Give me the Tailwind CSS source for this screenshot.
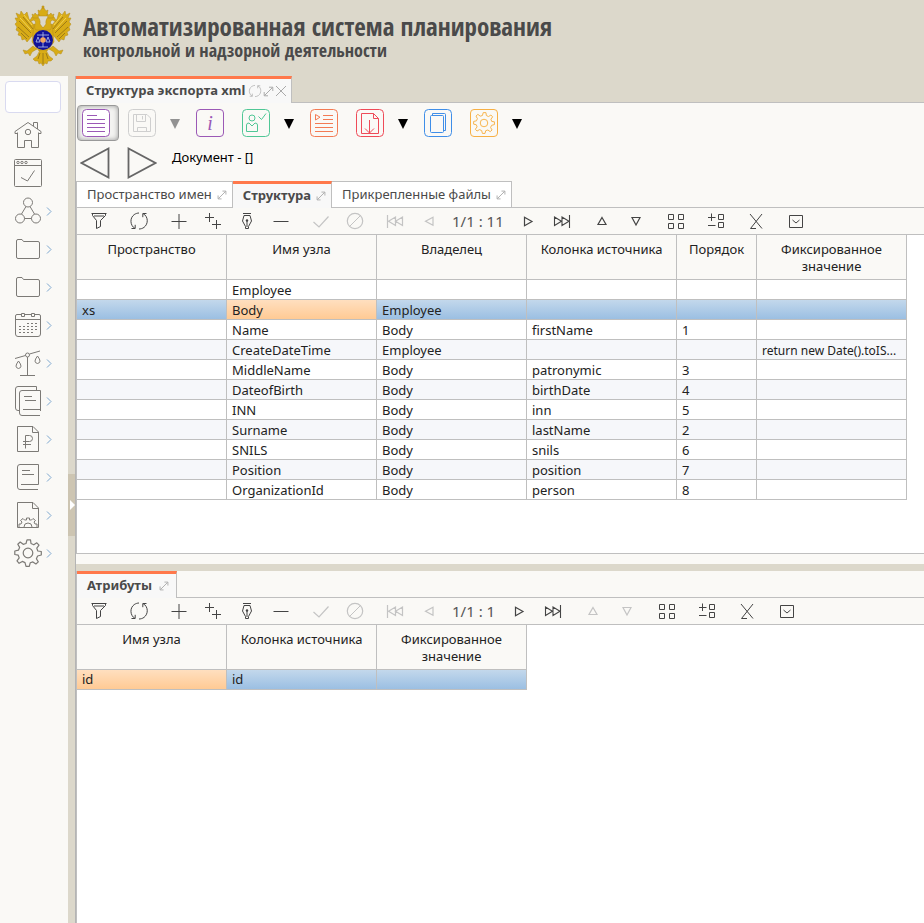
<!DOCTYPE html>
<html lang="ru">
<head>
<meta charset="utf-8">
<title>Структура экспорта xml</title>
<script src="https://cdn.jsdelivr.net/npm/@tailwindcss/browser@4"></script>
</head>
<body class="flex min-h-screen flex-col bg-[#faf9f6] font-['Noto_Sans','Open_Sans',sans-serif] text-[13px] text-[#222]">

<svg class="hidden" aria-hidden="true">
  <symbol id="expand" viewBox="0 0 11 11"><path d="M1.5 9.5 9.5 1.500M6 1.200H9.800V5M1.200 6V9.800H5" fill="none" stroke="currentColor"/></symbol>
  <symbol id="refresh" viewBox="0 0 20 20"><path d="M6 17.500C1 14.500.5 7 5.200 3.600 6.600 2.600 8.500 2 10 2M14 2.500C19.500 5.500 19.500 13 15 16.400 13.500 17.500 11.500 18 10 18M2.500 17.500H6.200V13.800M17.500 2.500H13.800V6.200" fill="none" stroke="currentColor"/></symbol>
  <symbol id="filter" viewBox="0 0 20 20"><path d="M2.500 2.500H17.500M3.500 2.500V4.500L7.500 9.500V17.500L11.500 15.500V9.500L16.500 4.500V2.500M5 5H15" fill="none" stroke="currentColor"/></symbol>
  <symbol id="plus" viewBox="0 0 20 20"><path d="M10 3V18M2.500 10.500H17.500" fill="none" stroke="currentColor"/></symbol>
  <symbol id="plus2" viewBox="0 0 20 20"><path d="M6.500 2V11M2 6.500H11M13.500 9V18M9 13.500H18" fill="none" stroke="currentColor"/></symbol>
  <symbol id="pen" viewBox="0 0 20 20"><path d="M6 2.500H14M7 4.500H13L14.500 10 11.500 15.500V17.500H8.500V15.500L5.500 10ZM10 10V16" fill="none" stroke="currentColor"/><circle cx="10" cy="9.500" r="1.200" fill="currentColor"/></symbol>
  <symbol id="minus" viewBox="0 0 20 20"><path d="M2.500 10.500H17.500" fill="none" stroke="currentColor"/></symbol>
  <symbol id="check" viewBox="0 0 20 20"><path d="M2.500 11 8 16 17.500 5.500" fill="none" stroke="currentColor" stroke-width="1.200"/></symbol>
  <symbol id="cancel" viewBox="0 0 20 20"><path d="M4.500 15.500 15.500 4.500" stroke="currentColor"/><circle cx="10" cy="10" r="7.700" fill="none" stroke="currentColor" stroke-width="1.200"/></symbol>
  <symbol id="first" viewBox="0 0 20 20"><path d="M2.500 4V17M10.500 6V14.500L3.500 10.200ZM17.500 6V14.500L10.500 10.200Z" fill="none" stroke="currentColor" stroke-width="1.200"/></symbol>
  <symbol id="prev" viewBox="0 0 20 20"><path d="M14 6.200V14.300L6.500 10.200Z" fill="none" stroke="currentColor" stroke-width="1.200"/></symbol>
  <symbol id="next" viewBox="0 0 20 20"><path d="M6.500 6.200V14.800L14 10.500Z" fill="none" stroke="currentColor" stroke-width="1.200"/></symbol>
  <symbol id="last" viewBox="0 0 20 20"><path d="M17.500 4V17M2.500 6V14.500L9.500 10.200ZM10 6V14.500L17 10.200Z" fill="none" stroke="currentColor" stroke-width="1.100"/></symbol>
  <symbol id="up" viewBox="0 0 20 20"><path d="M10 6.500 14 13.500H6Z" fill="none" stroke="currentColor" stroke-width="1.200"/></symbol>
  <symbol id="down" viewBox="0 0 20 20"><path d="M10 14 14 6.500H6Z" fill="none" stroke="currentColor" stroke-width="1.200"/></symbol>
  <symbol id="grid" viewBox="0 0 20 20"><path d="M2.500 3.500H7.500V8.500H2.500ZM12.500 3.500H17.500V8.500H12.500ZM2.500 12.500H7.500V17.500H2.500ZM12.500 12.500H17.500V17.500H12.500Z" fill="none" stroke="currentColor"/></symbol>
  <symbol id="plusgrid" viewBox="0 0 20 20"><path d="M12.500 3.500H17.500V8.500H12.500ZM12.500 11.500H17.500V16.500H12.500ZM2 6.500H9.500M5.500 2.500V10M2 14.500H9.500" fill="none" stroke="currentColor"/></symbol>
  <symbol id="excel" viewBox="0 0 20 20"><path d="M4 3 16 17.500M16 3 4.500 17.500H10" fill="none" stroke="currentColor"/></symbol>
  <symbol id="box" viewBox="0 0 20 20"><path d="M3.500 4.500H16.500V16.500H3.500ZM6.500 9 10 12 13.500 9" fill="none" stroke="currentColor"/></symbol>
  <symbol id="chev" viewBox="0 0 6 9"><path d="M1 .5 5 4.500 1 8.500" fill="none" stroke="#7da7cf"/></symbol>
  <symbol id="folder" viewBox="0 0 28 28"><path d="M2.500 6V22Q2.500 23.500 4 23.500H24Q25.500 23.500 25.500 22V8Q25.500 6.500 24 6.500H9.500L8 4.500H4Q2.500 4.500 2.500 6Z" fill="none" stroke="currentColor"/></symbol>
  <symbol id="gear" viewBox="0 0 28 28"><path d="M12 4.500 13 .800H16.500L17 4.500 19.800 5.800 22.800 3.800 25 6.200 22.800 9.200 23.800 12 27.300 12.500V16L23.600 17 22.400 19.800 24.300 22.900 21.900 25 18.900 22.900 16.200 23.800 15.300 27.300H12L11 23.600 8.300 22.400 5.100 24.300 3 21.900 5.200 18.900 4.200 16.200.8 15.500V12L4.400 11.200 5.600 8.400 3.800 5.200 6.200 3 9.200 5.300Z" fill="none" stroke="currentColor" stroke-width="1.200" stroke-linejoin="round"/><circle cx="14" cy="14" r="4.800" fill="none" stroke="currentColor" stroke-width="1.200"/></symbol>
</svg>

<header class="flex h-[76px] shrink-0 items-start bg-[#dcd8cb]">
  <svg class="ml-3 mt-1 h-16 w-[60px] shrink-0" viewBox="0 0 60 64" role="img" aria-label="Герб">
    <g fill="#d8ac16" stroke="#b28a1c" stroke-width=".5">
      <path d="M27 28 21 31 15 38 13 35 10 36 9 32 6 31 7 28 4 26 5 23 3 20 5 18 3 14 6 14 4 9 8 11 9 7 12 11 15 8 17 15 22 21 27 22Z"/>
      <path d="M35 28 41 31 47 38 49 35 52 36 53 32 56 31 55 28 58 26 57 23 59 20 57 18 59 14 56 14 58 9 54 11 53 7 50 11 47 8 45 15 40 21 35 22Z"/>
      <path d="M22 20 31 24 40 20 42 38 35 47 27 47 20 38Z"/>
      <path d="M24 26C20 22 26 19 22 16L17 18 20 13C25 10 29 15 28 20L31 24 34 20C33 15 37 10 42 13L45 18 40 16C36 19 42 22 38 26Z"/>
      <path d="M28 46 25 52 21 55 23 57 26 57 27 60 29 59 31 62 33 59 35 60 36 57 39 57 41 55 37 52 34 46Z"/>
      <path d="M21 42 15 47 11 46 13 50 16 49 18 52 20 48 25 45ZM41 42 47 47 51 46 49 50 46 49 44 52 42 48 37 45Z"/>
      <path d="M26 6 28 7 30 4H32L34 7 36 6 35 12H27ZM30 2H32V4H30ZM20 10 22 11 23 9 25 11 27 10 26 14H21ZM42 10 40 11 39 9 37 11 35 10 36 14H41Z"/>
    </g>
    <path d="M7 17 19 29M6 23 17 33M11 13 21 25M9 29 15 35M55 17 43 29M56 23 45 33M51 13 41 25M53 29 47 35M28 49 26 55M31 49V60M34 49 36 55" fill="none" stroke="#8f6f16" stroke-width=".8"/>
    <path d="M8 14 19 26M12 11 20 21M54 14 43 26M50 11 42 21" stroke="#f5d453"/>
    <circle cx="31" cy="36" r="10" fill="#10129a"/>
    <path d="M31 28V43M25 31H37M24 38 26 33 28 38ZM34 38 36 33 38 38ZM26 43H36" fill="none" stroke="#b9c7ec" stroke-width=".8"/>
    <circle cx="31" cy="36" r="2.800" fill="#f2a65f"/>
  </svg>
  <div class="ml-[11px] mt-[11px] whitespace-nowrap font-['Open_Sans_Condensed','Noto_Sans_Condensed',Roboto,sans-serif] font-bold text-[#4a4a4a]">
    <h1 class="text-[25px] leading-[30px]">Автоматизированная система планирования</h1>
    <p class="text-[18px] leading-[18px]">контрольной и надзорной деятельности</p>
  </div>
</header>

<div class="flex flex-1">
  <aside class="w-[68px] shrink-0 pt-[5px] text-[#7c7a76]">
    <input type="search" aria-label="Поиск" class="ml-[5px] block h-8 w-14 rounded border border-[#d9daf0] bg-white px-1">
    <nav class="mt-[3px] flex flex-col">
      <a href="#" aria-label="Главная" class="flex h-[38px] items-center pl-[14px]"><svg class="size-7" viewBox="0 0 28 28" fill="none" stroke="currentColor"><path d="M3.500 11.500V26.500H10.500V19.500H17.500V26.500H24.500V11.500M1 12.500V10.500L14 1.500 27 10.500V12.500L24.500 12.500M1 12.500H3.500M19.500 5V1.500H23.500V8"/><circle cx="14" cy="11" r="2.700"/></svg></a>
      <a href="#" aria-label="Задачи" class="flex h-[38px] items-center pl-[14px]"><svg class="size-7" viewBox="0 0 28 28" fill="none" stroke="currentColor"><rect x=".5" y=".5" width="27" height="27" rx="1"/><path d="M.5 6.500H27.500M7 18.500 13.500 22 20.500 11.500"/><circle cx="4" cy="3.500" r="1.200"/><circle cx="8" cy="3.500" r="1.200"/><circle cx="12" cy="3.500" r="1.200"/></svg></a>
      <a href="#" aria-label="Процессы" class="flex h-[38px] items-center gap-1 pl-[14px]"><svg class="size-7" viewBox="0 0 28 28" fill="none" stroke="currentColor"><circle cx="14" cy="5.500" r="4.500"/><circle cx="6" cy="21.500" r="4.500"/><circle cx="22" cy="21.500" r="4.500"/><path d="M12 9.500 7.500 17M16 9.500 20.500 17M10.500 21.500H17.500"/></svg><svg class="h-[9px] w-[6px]"><use href="#chev"/></svg></a>
      <a href="#" aria-label="Папка" class="flex h-[38px] items-center gap-1 pl-[14px]"><svg class="size-7"><use href="#folder"/></svg><svg class="h-[9px] w-[6px]"><use href="#chev"/></svg></a>
      <a href="#" aria-label="Архив" class="flex h-[38px] items-center gap-1 pl-[14px]"><svg class="size-7"><use href="#folder"/></svg><svg class="h-[9px] w-[6px]"><use href="#chev"/></svg></a>
      <a href="#" aria-label="Календарь" class="flex h-[38px] items-center gap-1 pl-[14px]"><svg class="size-7" viewBox="0 0 28 28" fill="none" stroke="currentColor"><path d="M7.500 3.500H3Q1.500 3.500 1.500 5V23Q1.500 25.500 4 25.500H24Q26.500 25.500 26.500 23V5Q26.500 3.500 25 3.500H20.500M10.500 3.500H17.500M1.500 8.500H26.500M7.500 2.500H10.500V5.500H7.500ZM17.500 2.500H20.500V5.500H17.500Z"/><path d="M13 12.500H24M5 15.500H24M5 18.500H24M5 21.500H19" stroke-dasharray="2 2"/></svg><svg class="h-[9px] w-[6px]"><use href="#chev"/></svg></a>
      <a href="#" aria-label="Весы" class="flex h-[38px] items-center gap-1 pl-[14px]"><svg class="size-7" viewBox="0 0 28 28" fill="none" stroke="currentColor"><path d="M1 9.500 11.500 6.500M15.500 5 26 2M13.500 8V26.500M6 26.500H21M4.500 12Q-.5 18.500 4.500 19.500 9.500 18.500 4.500 12ZM23.500 7Q18.500 13.500 23.500 14.500 28.500 13.500 23.500 7Z"/><circle cx="13.500" cy="6" r="2"/></svg><svg class="h-[9px] w-[6px]"><use href="#chev"/></svg></a>
      <a href="#" aria-label="Документы" class="flex h-[38px] items-center gap-1 pl-[14px]"><svg class="h-[30px] w-7" viewBox="0 0 28 30" fill="none" stroke="currentColor"><path d="M22.500 4.500V.5H4Q1.500.5 1.500 3V22Q1.500 24.500 4 24.500H5M5.500 7V27Q5.500 29.500 8 29.500H26M26.500 25V4.500H8Q5.500 4.500 5.500 7M10 10.500H18M11 14.500H22M9 23.500H26.500"/></svg><svg class="h-[9px] w-[6px]"><use href="#chev"/></svg></a>
      <a href="#" aria-label="Платежи" class="flex h-[38px] items-center gap-1 pl-[14px]"><svg class="size-7" viewBox="0 0 28 28" fill="none" stroke="currentColor"><path d="M3.500 1.500H19L24.500 7V26.500H3.500ZM18.500 1.500V7.500H24.500M11.500 23.500V10.500H15.500Q18.500 10.500 18.500 13.500T15.500 16.500H9M9 19.500H17"/></svg><svg class="h-[9px] w-[6px]"><use href="#chev"/></svg></a>
      <a href="#" aria-label="Справочник" class="flex h-[38px] items-center gap-1 pl-[14px]"><svg class="size-7" viewBox="0 0 28 28" fill="none" stroke="currentColor"><path d="M24.500 21.500V1.500H6Q3.500 1.500 3.500 4V24Q3.500 26.500 6 26.500H24M8 7.500H16M8 11.500H20M7 21.500H24.500"/></svg><svg class="h-[9px] w-[6px]"><use href="#chev"/></svg></a>
      <a href="#" aria-label="Настройка документов" class="flex h-[38px] items-center gap-1 pl-[14px]"><svg class="size-7" viewBox="0 0 28 28" fill="none" stroke="currentColor"><path d="M3.500 1.500H19L24.500 7V26.500H3.500ZM18.500 1.500V7.500H24.500M5 26V23H7L8 21 6.500 19.500 9 17.500 10.500 19H12.500V17H15.500V19H17.500L19 17.500 21.500 19.500 20 21 21 23H23V26M10 26Q10 22 14 22T18 26"/></svg><svg class="h-[9px] w-[6px]"><use href="#chev"/></svg></a>
      <a href="#" aria-label="Настройки" class="flex h-[38px] items-center gap-1 pl-[14px]"><svg class="size-7"><use href="#gear"/></svg><svg class="h-[9px] w-[6px]"><use href="#chev"/></svg></a>
    </nav>
  </aside>

  <div class="w-[7px] shrink-0 bg-[#dcd8cb] pt-[398px]">
    <button aria-label="Свернуть панель" class="flex h-[62px] w-full items-center justify-end bg-[#cdc5b2]"><svg class="h-[10px] w-[5px]" viewBox="0 0 5 10"><path d="M0 0 5 5 0 10Z" fill="#fff"/></svg></button>
  </div>

  <main class="flex min-w-0 flex-1 flex-col border-l border-[#b4b4b4]">
    <div class="flex h-[27px] bg-[#dcd8cb]">
      <div class="flex items-center border-r border-t-3 border-r-[#bfbfbf] border-t-[#ff784b] bg-[#f8f8f8] pl-[10px] pr-1 text-[#4a4a4a]">
        <h2 class="mr-[3px] whitespace-nowrap text-[13px] font-bold">Структура экспорта xml</h2>
        <button aria-label="Обновить" class="text-[#aaa]"><svg class="size-[14px]"><use href="#refresh"/></svg></button>
        <button aria-label="Развернуть" class="text-[#aaa]"><svg class="mx-px size-[11px]"><use href="#expand"/></svg></button>
        <button aria-label="Закрыть" class="text-[#aaa]"><svg class="size-3" viewBox="0 0 12 12"><path d="M1 1 11 11M11 1 1 11" stroke="currentColor"/></svg></button>
      </div>
      <div class="flex-1 border-b border-[#bfbfbf]"></div>
    </div>

    <div class="flex gap-1 pl-px pt-[2px]">
      <button aria-label="Документ" class="flex h-9 w-[42px] items-center rounded border border-[#999] bg-[#f3f3f1] pl-1 text-[#9b59b6] shadow-[inset_0_0_5px_#999]"><svg class="size-7" viewBox="0 0 28 28" fill="none" stroke="currentColor"><rect x=".5" y=".5" width="27" height="27" rx="4" fill="#fff"/><path d="M5 6.500H15M5 10.500H23M5 14.500H23M5 18.500H23M5 22.500H23"/></svg></button>
      <div class="flex">
        <button aria-label="Сохранить" disabled class="flex h-9 w-[42px] items-center pl-[5px] text-[#cfcfcf]"><svg class="size-7" viewBox="0 0 28 28" fill="none" stroke="currentColor"><rect x=".5" y=".5" width="27" height="27" rx="4"/><path d="M5.500 5.500H19L22.500 9V22.500H5.500ZM8.500 5.500V12.500H17.500V5.500M14.500 7V10.500M9.500 22.500V18.500H18.500V22.500"/></svg></button>
        <button aria-label="Варианты сохранения" disabled class="flex w-[22px] items-center pl-[5px] text-[#929292]"><svg class="mt-[2px] h-[10px] w-[10px]" viewBox="0 0 10 10"><path d="M0 0H10L5 10Z" fill="currentColor"/></svg></button>
      </div>
      <button aria-label="Информация" class="flex h-9 w-[42px] items-center pl-[5px] text-[#9b59b6]"><span class="flex size-7 items-center justify-center rounded border border-current font-['Liberation_Serif',serif] text-xl italic">i</span></button>
      <div class="flex">
        <button aria-label="Согласование" class="flex h-9 w-[42px] items-center pl-[5px] text-[#50c796]"><svg class="size-7" viewBox="0 0 28 28" fill="none" stroke="currentColor"><rect x=".5" y=".5" width="27" height="27" rx="4"/><circle cx="10" cy="9" r="3"/><path d="M4.500 22.500V16Q4.500 14 7 14L10 17 13 14Q15.500 14 15.500 16V22.500ZM16.500 7.500 19.500 10.500 24 4.500"/></svg></button>
        <button aria-label="Варианты согласования" class="flex w-[22px] items-center pl-[5px] text-black"><svg class="mt-[2px] h-[10px] w-[10px]" viewBox="0 0 10 10"><path d="M0 0H10L5 10Z" fill="currentColor"/></svg></button>
      </div>
      <button aria-label="Выполнить" class="flex h-9 w-[42px] items-center pl-[5px] text-[#f37b54]"><svg class="size-7" viewBox="0 0 28 28" fill="none" stroke="currentColor"><rect x=".5" y=".5" width="27" height="27" rx="4"/><path d="M5.500 5.500V11L10 8.200ZM13 6.500H23M13 10.500H23M5 14.500H23M5 18.500H23M5 22.500H23"/></svg></button>
      <div class="flex">
        <button aria-label="Выгрузить" class="flex h-9 w-[42px] items-center pl-[5px] text-[#ef4b58]"><svg class="size-7" viewBox="0 0 28 28" fill="none" stroke="currentColor"><rect x=".5" y=".5" width="27" height="27" rx="4"/><path d="M5.500 4.500H17.500L22.500 9.500V24.500H5.500ZM17.500 4.500V9.500H22.500M13.500 11V24M9 19.500 13.500 24 18 19.500"/></svg></button>
        <button aria-label="Варианты выгрузки" class="flex w-[22px] items-center pl-[5px] text-black"><svg class="mt-[2px] h-[10px] w-[10px]" viewBox="0 0 10 10"><path d="M0 0H10L5 10Z" fill="currentColor"/></svg></button>
      </div>
      <button aria-label="Копировать" class="flex h-9 w-[42px] items-center pl-[5px] text-[#3f8ee8]"><svg class="size-7" viewBox="0 0 28 28" fill="none" stroke="currentColor"><rect x=".5" y=".5" width="27" height="27" rx="4"/><rect x="6.500" y="6.500" width="13" height="17" rx="1"/><path d="M8.500 6V4.500H20.500Q21.500 4.500 21.500 5.500V21.500H20"/></svg></button>
      <div class="flex">
        <button aria-label="Настройки" class="flex h-9 w-[42px] items-center pl-[5px] text-[#f7b045]"><span class="flex size-7 items-center justify-center rounded border border-current"><svg class="size-[22px]" viewBox="0 0 28 28"><use href="#gear"/></svg></span></button>
        <button aria-label="Варианты настроек" class="flex w-[22px] items-center pl-[5px] text-black"><svg class="mt-[2px] h-[10px] w-[10px]" viewBox="0 0 10 10"><path d="M0 0H10L5 10Z" fill="currentColor"/></svg></button>
      </div>
    </div>

    <div class="flex h-10 items-start pl-1 pt-[6px]">
      <button aria-label="Назад"><svg class="h-8 w-[30px]" viewBox="0 0 30 32"><path d="M28.500 1.500V30.500L1.500 16Z" fill="none" stroke="#666" stroke-width="1.800"/></svg></button>
      <button aria-label="Вперёд" class="ml-[17px]"><svg class="h-8 w-[30px]" viewBox="0 0 30 32"><path d="M1.500 1.500V30.500L28.500 16Z" fill="none" stroke="#666" stroke-width="1.800"/></svg></button>
      <span class="ml-[15px] mt-px text-[13px] text-black">Документ - []</span>
    </div>

    <section class="border-l border-[#bfbfbf]" aria-label="Структура">
      <div class="flex h-[27px] whitespace-nowrap text-[#4a4a4a]" role="tablist">
        <button role="tab" class="flex items-center gap-[5px] border-y border-r border-[#bfbfbf] bg-white pl-[10px] pr-[5px]">Пространство имен<svg class="size-[10px] text-[#aaa]"><use href="#expand"/></svg></button>
        <button role="tab" aria-selected="true" class="flex items-center gap-[5px] border-t-3 border-r border-r-[#bfbfbf] border-t-[#ff784b] bg-[#f8f8f8] pl-[10px] pr-[5px] font-bold">Структура<svg class="size-[10px] text-[#aaa]"><use href="#expand"/></svg></button>
        <button role="tab" class="flex items-center gap-[5px] border-y border-r border-[#bfbfbf] bg-white pl-[10px] pr-[5px]">Прикрепленные файлы<svg class="size-[10px] text-[#aaa]"><use href="#expand"/></svg></button>
        <div class="flex-1 border-b border-[#bfbfbf]"></div>
      </div>
      <div class="flex h-[27px] gap-[6px] border-b border-[#bfbfbf] pl-[5px] text-[#444] [&_button]:flex [&_button]:w-[34px] [&_button]:items-center [&_button]:justify-center [&_button:disabled]:text-[#c4c4c4] [&_svg]:size-5">
        <button aria-label="Фильтр"><svg><use href="#filter"/></svg></button>
        <button aria-label="Обновить"><svg><use href="#refresh"/></svg></button>
        <div class="flex">
          <button aria-label="Добавить"><svg><use href="#plus"/></svg></button>
          <button aria-label="Добавить копию"><svg><use href="#plus2"/></svg></button>
          <button aria-label="Изменить"><svg><use href="#pen"/></svg></button>
          <button aria-label="Удалить"><svg><use href="#minus"/></svg></button>
        </div>
        <div class="flex">
          <button aria-label="Принять" disabled><svg><use href="#check"/></svg></button>
          <button aria-label="Отменить" disabled><svg><use href="#cancel"/></svg></button>
        </div>
        <div class="flex">
          <button aria-label="Первая" disabled><svg><use href="#first"/></svg></button>
          <button aria-label="Предыдущая" disabled><svg><use href="#prev"/></svg></button>
          <span class="flex items-center pl-[6px] pr-[7px] text-[15px] text-[#555]">1/1 : 11</span>
          <button aria-label="Следующая"><svg><use href="#next"/></svg></button>
          <button aria-label="Последняя"><svg><use href="#last"/></svg></button>
        </div>
        <div class="flex">
          <button aria-label="Вверх"><svg><use href="#up"/></svg></button>
          <button aria-label="Вниз"><svg><use href="#down"/></svg></button>
        </div>
        <button aria-label="Плитка"><svg><use href="#grid"/></svg></button>
        <button aria-label="Колонки"><svg><use href="#plusgrid"/></svg></button>
        <button aria-label="Экспорт"><svg><use href="#excel"/></svg></button>
        <button aria-label="Ещё"><svg><use href="#box"/></svg></button>
      </div>
      <div class="border-b border-[#bfbfbf] bg-white pb-[53px]">
        <table class="w-[830px] table-fixed border-separate border-spacing-0 leading-[17px] [&_td]:h-5 [&_td]:overflow-hidden [&_td]:border-b [&_td]:border-r [&_td]:border-[#bfbfbf] [&_td]:pl-[5px] [&_td]:pr-1 [&_td]:pt-[2px] [&_td]:text-ellipsis [&_td]:whitespace-nowrap [&_th]:h-[45px] [&_th]:border-b [&_th]:border-r [&_th]:border-[#bfbfbf] [&_th]:bg-[#faf9f6] [&_th]:px-3 [&_th]:pt-[6px] [&_th]:align-top [&_th]:font-normal [&_tbody_tr:nth-child(even)]:bg-[#f6f7fa]">
          <colgroup><col class="w-[150px]"><col class="w-[150px]"><col class="w-[150px]"><col class="w-[150px]"><col class="w-[80px]"><col class="w-[150px]"></colgroup>
          <thead><tr><th>Пространство</th><th>Имя узла</th><th>Владелец</th><th>Колонка источника</th><th>Порядок</th><th>Фиксированное значение</th></tr></thead>
          <tbody>
            <tr><td></td><td>Employee</td><td></td><td></td><td></td><td></td></tr>
            <tr class="[&_td]:bg-linear-to-b [&_td]:from-[#c3d8ec] [&_td]:to-[#9bbfe2]"><td>xs</td><td class="from-[#ffdfbf]! to-[#ffca94]!">Body</td><td>Employee</td><td></td><td></td><td></td></tr>
            <tr><td></td><td>Name</td><td>Body</td><td>firstName</td><td>1</td><td></td></tr>
            <tr><td></td><td>CreateDateTime</td><td>Employee</td><td></td><td></td><td class="text-[12px]">return new Date().toIS...</td></tr>
            <tr><td></td><td>MiddleName</td><td>Body</td><td>patronymic</td><td>3</td><td></td></tr>
            <tr><td></td><td>DateofBirth</td><td>Body</td><td>birthDate</td><td>4</td><td></td></tr>
            <tr><td></td><td>INN</td><td>Body</td><td>inn</td><td>5</td><td></td></tr>
            <tr><td></td><td>Surname</td><td>Body</td><td>lastName</td><td>2</td><td></td></tr>
            <tr><td></td><td>SNILS</td><td>Body</td><td>snils</td><td>6</td><td></td></tr>
            <tr><td></td><td>Position</td><td>Body</td><td>position</td><td>7</td><td></td></tr>
            <tr><td></td><td>OrganizationId</td><td>Body</td><td>person</td><td>8</td><td></td></tr>
          </tbody>
        </table>
      </div>
    </section>

    <div class="mt-[10px] h-[7px] bg-[#dcd8cb]"></div>

    <section class="flex flex-1 flex-col border-l border-[#bfbfbf]" aria-label="Атрибуты">
      <div class="flex h-[27px] whitespace-nowrap text-[#4a4a4a]" role="tablist">
        <button role="tab" aria-selected="true" class="flex items-center gap-[7px] border-t-3 border-r border-r-[#bfbfbf] border-t-[#ff784b] bg-[#f8f8f8] pl-[10px] pr-[7px] font-bold">Атрибуты<svg class="size-[10px] text-[#aaa]"><use href="#expand"/></svg></button>
        <div class="flex-1 border-b border-[#bfbfbf]"></div>
      </div>
      <div class="flex h-[27px] gap-[6px] border-b border-[#bfbfbf] pl-[5px] text-[#444] [&_button]:flex [&_button]:w-[34px] [&_button]:items-center [&_button]:justify-center [&_button:disabled]:text-[#c4c4c4] [&_svg]:size-5">
        <button aria-label="Фильтр"><svg><use href="#filter"/></svg></button>
        <button aria-label="Обновить"><svg><use href="#refresh"/></svg></button>
        <div class="flex">
          <button aria-label="Добавить"><svg><use href="#plus"/></svg></button>
          <button aria-label="Добавить копию"><svg><use href="#plus2"/></svg></button>
          <button aria-label="Изменить"><svg><use href="#pen"/></svg></button>
          <button aria-label="Удалить"><svg><use href="#minus"/></svg></button>
        </div>
        <div class="flex">
          <button aria-label="Принять" disabled><svg><use href="#check"/></svg></button>
          <button aria-label="Отменить" disabled><svg><use href="#cancel"/></svg></button>
        </div>
        <div class="flex">
          <button aria-label="Первая" disabled><svg><use href="#first"/></svg></button>
          <button aria-label="Предыдущая" disabled><svg><use href="#prev"/></svg></button>
          <span class="flex items-center pl-[6px] pr-[7px] text-[15px] text-[#555]">1/1 : 1</span>
          <button aria-label="Следующая"><svg><use href="#next"/></svg></button>
          <button aria-label="Последняя"><svg><use href="#last"/></svg></button>
        </div>
        <div class="flex">
          <button aria-label="Вверх" disabled><svg><use href="#up"/></svg></button>
          <button aria-label="Вниз" disabled><svg><use href="#down"/></svg></button>
        </div>
        <button aria-label="Плитка"><svg><use href="#grid"/></svg></button>
        <button aria-label="Колонки"><svg><use href="#plusgrid"/></svg></button>
        <button aria-label="Экспорт"><svg><use href="#excel"/></svg></button>
        <button aria-label="Ещё"><svg><use href="#box"/></svg></button>
      </div>
      <div class="flex-1 bg-white">
        <table class="w-[450px] table-fixed border-separate border-spacing-0 leading-[17px] [&_td]:h-5 [&_td]:border-b [&_td]:border-r [&_td]:border-[#bfbfbf] [&_td]:bg-linear-to-b [&_td]:from-[#c3d8ec] [&_td]:to-[#9bbfe2] [&_td]:pl-[5px] [&_th]:h-[45px] [&_th]:border-b [&_th]:border-r [&_th]:border-[#bfbfbf] [&_th]:bg-[#faf9f6] [&_th]:px-3 [&_th]:pt-[6px] [&_th]:align-top [&_th]:font-normal">
          <thead><tr><th>Имя узла</th><th>Колонка источника</th><th>Фиксированное значение</th></tr></thead>
          <tbody><tr><td class="from-[#ffdfbf]! to-[#ffca94]!">id</td><td>id</td><td></td></tr></tbody>
        </table>
      </div>
    </section>
  </main>
</div>
</body>
</html>
